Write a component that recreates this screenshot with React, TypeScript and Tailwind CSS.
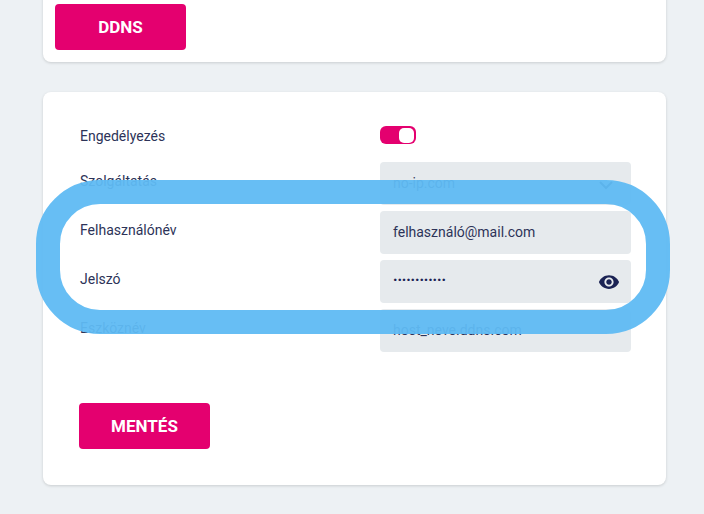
function Field({ label, value, chevron, eye, dots }: { label: string; value: string; chevron?: boolean; eye?: boolean; dots?: boolean }) {
  return (
    <div className="flex mb-[6px] h-[43px]">
      <label className="w-[301px] pl-px pt-[8px] text-[14px] leading-[22px] text-[#2d3358]">{label}</label>
      <div className="flex w-[251px] items-center justify-between rounded-[4px] bg-[#e6eaed] pl-[13px] pr-[11px]">
        {dots ? (
          <span className="pb-[3px] text-[14px] font-black leading-none tracking-[-0.1px] text-[#1b2354]">{value}</span>
        ) : (
          <span className="pb-[1px] text-[14px] text-[#2d3358]">{value}</span>
        )}
        {chevron && (
          <svg width="16" height="10" viewBox="0 0 16 10" fill="none" stroke="#2d3358" strokeWidth="2" className="mr-[6px] mt-[2px]">
            <path d="M2 2l6 6 6-6" />
          </svg>
        )}
        {eye && (
          <svg width="22" height="22" viewBox="0 0 24 24" fill="#1b2354">
            <path d="M12 4.5C7 4.5 2.73 7.61 1 12c1.73 4.39 6 7.5 11 7.5s9.27-3.11 11-7.5c-1.73-4.39-6-7.5-11-7.5zM12 17c-2.76 0-5-2.24-5-5s2.24-5 5-5 5 2.24 5 5-2.24 5-5 5zm0-8c-1.66 0-3 1.34-3 3s1.34 3 3 3 3-1.34 3-3-1.34-3-3-3z" />
          </svg>
        )}
      </div>
    </div>
  );
}

export default function App() {
  return (
    <div className="relative h-[514px] w-[704px] overflow-hidden bg-[#edf1f4] pl-[43px] font-['Roboto',sans-serif]">
      {/* Top card, scrolled partly out of view */}
      <div className="mt-[-40px] h-[102px] w-[623px] rounded-[8px] bg-white pl-[12px] pt-[44px] shadow-[0_1px_3px_rgba(0,0,0,0.15)]">
        <button className="h-[46px] w-[131px] rounded-[4px] bg-[#e4006f] pt-[2px] text-[17px] font-bold text-white">DDNS</button>
      </div>

      {/* DDNS settings */}
      <div className="mt-[30px] h-[393px] w-[623px] rounded-[8px] bg-white pl-[36px] pt-[34px] shadow-[0_1px_3px_rgba(0,0,0,0.15)]">
        <div className="mb-[18px] flex h-[18px] items-center">
          <span className="w-[301px] pl-px pt-[2px] text-[14px] text-[#2d3358]">Engedélyezés</span>
          <div className="flex h-[18px] w-[36px] items-center justify-end rounded-[6px] bg-[#e4006f] pr-[2px]">
            <div className="h-[15px] w-[15px] rounded-[5px] bg-white" />
          </div>
        </div>
        <Field label="Szolgáltatás" value="no-ip.com" chevron />
        <Field label="Felhasználónév" value="felhasználó@mail.com" />
        <Field label="Jelszó" value="············" eye dots />
        <Field label="Eszköznév" value="host_neve.ddns.com" />
        <button className="mt-[45px] h-[46px] w-[131px] rounded-[4px] bg-[#e4006f] pt-[2px] text-[17px] font-bold text-white">MENTÉS</button>
      </div>

      {/* Highlight ring drawn over the form */}
      <div className="absolute left-[36px] top-[180px] h-[154px] w-[634px] rounded-[64px] border-[24px] border-[#5fbaf3]/95" />
    </div>
  );
}
